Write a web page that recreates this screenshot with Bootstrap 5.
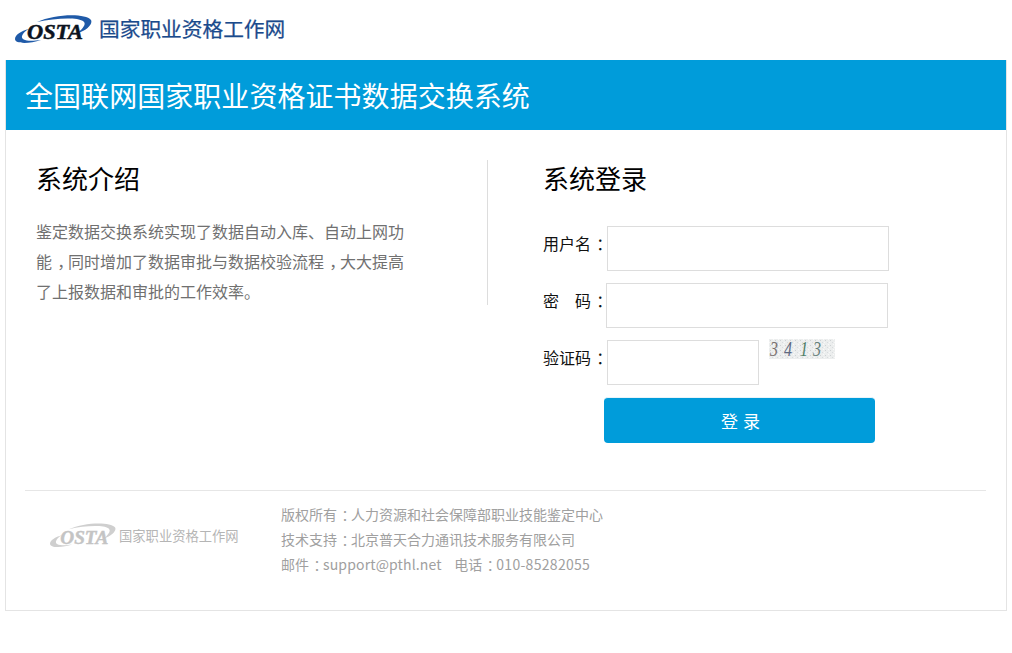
<!DOCTYPE html>
<html lang="zh-CN">
<head>
<meta charset="utf-8">
<title>全国联网国家职业资格证书数据交换系统</title>
<link rel="stylesheet" href="https://cdn.jsdelivr.net/npm/bootstrap@5.3.0/dist/css/bootstrap.min.css">
<style>
body{font-family:"Noto Sans CJK SC","Liberation Sans",sans-serif;background:#fff;color:#000}
.shell{padding:0 5px}
.topbar{height:60px;padding-left:10px}
.brand-name{font-size:20.7px;line-height:28px;color:#1a4a8c;margin-left:7px;margin-top:-5px;-webkit-text-stroke:.25px #1a4a8c}
.panel-box{border:1px solid #e4e4e4;border-top:0;height:551px}
.panel-title{background:#009cda;color:#fff;height:70px;margin:0 -1px;padding-left:19px;font-size:28px;line-height:71px;font-weight:400;letter-spacing:.05px}
.intro{width:482px;height:145px;margin-top:30px;padding-left:30px;border-right:1px solid #ddd}
.sect-h{font-size:26px;line-height:36px;font-weight:400;margin:0}
.intro p{font-size:16px;line-height:30px;color:#707070;width:372px;margin:20px 0 0}
.pt{font-feature-settings:"halt";padding-left:.32em;padding-right:.18em}
.login{padding-left:55px;margin-top:30px}
.fld-label{font-size:16px;line-height:24px;width:64px;flex:none;color:#111;align-self:flex-start;margin-top:5px;white-space:nowrap}
.fld-row{height:45px}
.fld-input{height:45px;width:282px;border:1px solid #ddd;border-radius:0;padding:0 8px}
.fld-input.short{width:152px}
.captcha{margin-left:10px;display:block;margin-top:-1px;overflow:visible}
.r1{margin-top:30px}.r2{margin-top:12px}.r3{margin-top:12px}
.r2 .fld-label{width:63px}
.btn-login{background:#009cda;color:#fff;border:0;border-top:1px solid #e8f4fa;border-radius:4px;width:271px;height:46px;margin:12px 0 0 61px;font-size:17px;letter-spacing:5px;display:block;padding:0 0 0 7px}
.btn-login:hover{background:#009cda;color:#fff}
.foot{margin:47px 20px 0 19px;border-top:1px solid #e6e6e6;height:119px}
.foot-logo{width:256px;padding:31px 0 0 25px;flex:none}
.foot-name{font-size:13.3px;line-height:18px;color:#b5b5b5;margin-left:3px;white-space:nowrap}
.foot-lines{padding-top:11px;font-size:14px;line-height:25px;color:#a0a0a0;white-space:nowrap}
.latin-w{letter-spacing:.15px}
.latin-x{letter-spacing:.3px}
.osta{font-family:"Liberation Serif",serif;font-style:italic;font-weight:700}
</style>
</head>
<body>
<div class="shell">
  <div class="topbar d-flex align-items-center">
    <svg width="77" height="32" viewBox="0 0 77 32">
      <path d="M0 25C0 30 14 30 26 26C12 28 6 26 7 22C8 19 10 17 14 15C6 17 0 21 0 25Z" fill="#1f5aa8"/>
      <path d="M22 8C40 0 70 -1 76 6C78 10 72 16 63 19C68 14 72 10 68 7C62 3 40 4 22 8Z" fill="#1f5aa8"/>
      <text x="12" y="25" class="osta" font-size="21" fill="#0b1320" stroke="#0b1320" stroke-width=".5" textLength="56" lengthAdjust="spacingAndGlyphs">OSTA</text>
    </svg>
    <div class="brand-name">国家职业资格工作网</div>
  </div>
  <div class="panel-box">
    <h1 class="panel-title m-0">全国联网国家职业资格证书数据交换系统</h1>
    <div class="d-flex">
      <div class="intro flex-none">
        <h2 class="sect-h">系统介绍</h2>
        <p>鉴定数据交换系统实现了数据自动入库、自动上网功能<span class="pt">，</span>同时增加了数据审批与数据校验流程<span class="pt">，</span>大大提高了上报数据和审批的工作效率。</p>
      </div>
      <form class="login" onsubmit="return false">
        <h2 class="sect-h">系统登录</h2>
        <div class="fld-row d-flex align-items-center r1">
          <label class="fld-label" for="u">用户名<span class="pt">：</span></label>
          <input id="u" class="fld-input" type="text">
        </div>
        <div class="fld-row d-flex align-items-center r2">
          <label class="fld-label" for="p">密&emsp;码<span class="pt">：</span></label>
          <input id="p" class="fld-input" type="password">
        </div>
        <div class="fld-row d-flex align-items-center r3">
          <label class="fld-label" for="c">验证码<span class="pt">：</span></label>
          <input id="c" class="fld-input short" type="text">
          <svg class="captcha align-self-start" width="66" height="20" viewBox="0 0 66 20">
            <defs><pattern id="n" width="5" height="5" patternUnits="userSpaceOnUse"><rect width="5" height="5" fill="#eceeee"/><rect x="1" y="1" width="1" height="1" fill="#cdd1d3"/><rect x="3" y="3" width="1" height="1" fill="#d8dbde"/><rect x="4" y="0" width="1" height="1" fill="#fafafa"/><rect x="0" y="3" width="1" height="1" fill="#f8f8f8"/></pattern></defs>
            <rect width="66" height="20" fill="url(#n)"/>
            <g font-family="Liberation Serif,serif" font-style="italic" font-size="16">
              <text transform="translate(1 17) scale(1 1.3)" fill="#7a7270">3</text>
              <text transform="translate(15 17) scale(1 1.3)" fill="#5f6a82">4</text>
              <text transform="translate(31 17) scale(1 1.3)" fill="#4f7f68">1</text>
              <text transform="translate(44 17) scale(1 1.3)" fill="#65807a">3</text>
            </g>
          </svg>
        </div>
        <button class="btn btn-login" type="submit">登录</button>
      </form>
    </div>
    <div class="foot d-flex">
      <div class="foot-logo d-flex align-items-center align-self-start">
        <svg width="66" height="28" viewBox="0 0 77 32">
          <path d="M0 25C0 30 14 30 26 26C12 28 6 26 7 22C8 19 10 17 14 15C6 17 0 21 0 25Z" fill="#cfcfcf"/>
          <path d="M22 8C40 0 70 -1 76 6C78 10 72 16 63 19C68 14 72 10 68 7C62 3 40 4 22 8Z" fill="#cfcfcf"/>
          <text x="12" y="25" class="osta" font-size="21" fill="#c4c4c4" stroke="#c4c4c4" stroke-width=".5" textLength="56" lengthAdjust="spacingAndGlyphs">OSTA</text>
        </svg>
        <div class="foot-name">国家职业资格工作网</div>
      </div>
      <div class="foot-lines">
        <div>版权所有<span class="pt">：</span>人力资源和社会保障部职业技能鉴定中心</div>
        <div>技术支持<span class="pt">：</span>北京普天合力通讯技术服务有限公司</div>
        <div>邮件<span class="pt">：</span><span class="latin-w">support@pthl.net</span>&nbsp;&nbsp;&nbsp;&nbsp;电话<span class="pt">：</span><span class="latin-x">010-85282055</span></div>
      </div>
    </div>
  </div>
</div>
<script src="https://cdn.jsdelivr.net/npm/bootstrap@5.3.0/dist/js/bootstrap.bundle.min.js"></script>
</body>
</html>
